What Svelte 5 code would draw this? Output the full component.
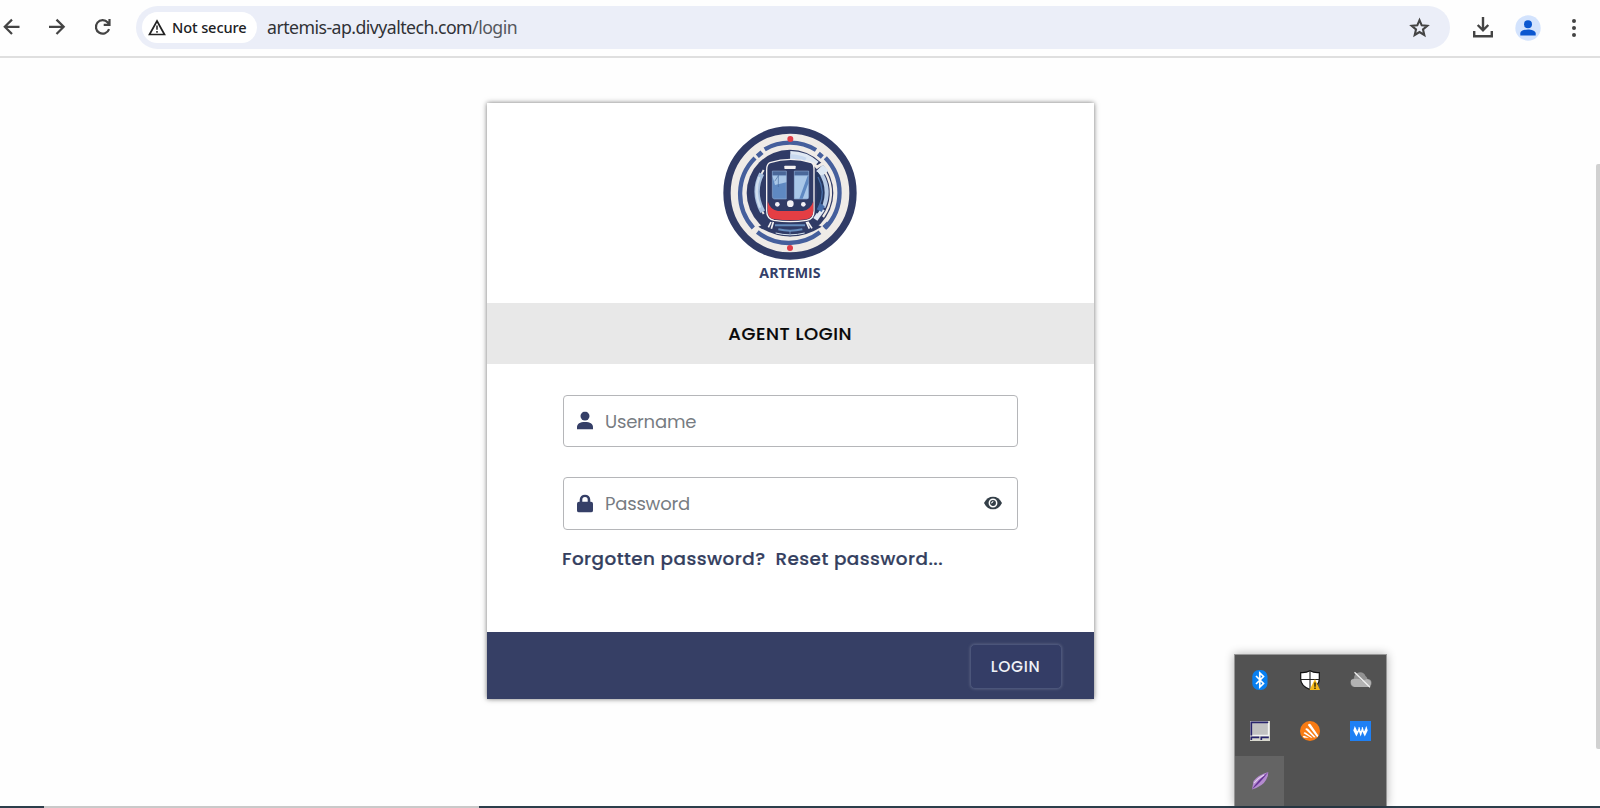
<script>
  let username = $state('');
  let password = $state('');
</script>

<div class="window">
  <header class="toolbar">
    <nav class="nav">
      <svg width="18" height="18" viewBox="0 0 18 18"><path d="M17 9H2.500M9.500 1.800L2.300 9l7.200 7.200" /></svg>
      <svg width="18" height="18" viewBox="0 0 18 18"><path d="M.500 9h14.500M8 1.800l7.200 7.200L8 16.200" /></svg>
      <svg width="18" height="18" viewBox="0 0 18 18"><path d="M14.600 11.400A6.800 6.800 0 1 1 13.300 4.600L15 6.300M15 1.200v5.900H9.200" /></svg>
    </nav>
    <div class="omnibox">
      <div class="chip">
        <svg width="18" height="17" viewBox="0 0 18 17"><path d="M9 2L16.500 15.500H1.500Z" fill="none" stroke="#222" stroke-width="1.700" /><path d="M9 6.500v4.300M9 12v1.700" stroke="#222" stroke-width="1.500" /></svg>
        <span>Not secure</span>
      </div>
      <span class="url">artemis-ap.divyaltech.com<i>/login</i></span>
      <svg class="star" width="22" height="22" viewBox="0 0 22 22"><path fill="none" stroke="#444" stroke-width="2.100" d="M11 3.300l2.200 5.200 5.600.500-4.300 3.700 1.300 5.500-4.800-2.900-4.800 2.900 1.300-5.500-4.300-3.700 5.600-.500z" /></svg>
    </div>
    <svg class="download" width="20" height="21" viewBox="0 0 20 21"><path d="M10 0v13M4.700 8l5.300 5.300L15.300 8M1.200 14v5.200h17.600V14" fill="none" stroke="#444" stroke-width="2.400" /></svg>
    <svg class="avatar" width="26" height="26" viewBox="0 0 26 26"><circle cx="13" cy="13" r="12.700" fill="#d3e3fd" /><circle cx="13" cy="9.200" r="4" fill="#0b57d0" /><path d="M5.300 20.500v-2.100c0-2.800 4.400-4 7.700-4s7.700 1.200 7.700 4v2.100z" fill="#0b57d0" /></svg>
    <svg class="dots" width="4" height="20" viewBox="0 0 4 20"><circle cx="2" cy="3" r="2" /><circle cx="2" cy="10" r="2" /><circle cx="2" cy="17" r="2" /></svg>
  </header>

  <main>
    <form class="card" onsubmit={(e) => e.preventDefault()}>
      <div class="brand">
        <svg width="160" height="170" viewBox="0 0 480 510">
          <circle cx="240" cy="234" r="189" fill="#efebe7" stroke="#303b66" stroke-width="22" />
          <g fill="none" stroke="#455f9c" stroke-width="13">
            <path d="M164 103a152 152 0 0 1 154 2M346 128a152 152 0 0 1-1 212M330 352a152 152 0 0 1-188-1M130 339a152 152 0 0 1 5-210" />
            <path d="M142 124l14-12M325 116l12 10M342 338l14-13" stroke-width="14" />
          </g>
          <circle cx="240" cy="234" r="130" fill="#303b66" />
          <g fill="none">
            <path d="M241 121a113 113 0 0 1 76 29" stroke="#dfe8f3" stroke-width="26" />
            <path d="M241 126a108 108 0 0 1 45 10" stroke="#c8d9ef" stroke-width="17" />
            <path d="M318 158l24-15M309 144l15 16" stroke="#efebe7" stroke-width="9" />
            <path d="M327 177l20-19" stroke="#dce7f3" stroke-width="24" />
            <path d="M346 172a122 122 0 0 1-7 134" stroke="#efebe7" stroke-width="7" />
            <path d="M335 181a109 109 0 0 1 4 95" stroke="#b9cde7" stroke-width="15" />
            <path d="M338 282l-22 31" stroke="#e2eaf4" stroke-width="15" />
            <path d="M314 177a92 92 0 0 1 0 112" stroke="#263861" stroke-width="22" />
            <path d="M324 186a99 99 0 0 1 3 89" stroke="#486da6" stroke-width="4" />
            <path d="M161 165q-39 62 0 132" stroke="#efebe7" stroke-width="6" />
            <path d="M155 176q-29 55 3 114" stroke="#a9c1df" stroke-width="16" />
            <path d="M148 186q-17 42 2 92" stroke="#d1e0ef" stroke-width="7" />
          </g>
          <path d="M330 265l14 9-9 17-15-8z" fill="#446caa" />
          <path d="M177 320h126l32 15q-94 59-190 0z" fill="#303b66" />
          <path d="M195 331h90M205 343q35 8 72 0" fill="none" stroke="#668cbd" stroke-width="6" />
          <path d="M175 337l8-16M184 341l6-20M306 340l-13-20M298 341l-9-20" stroke="#f4f2f2" stroke-width="5" />
          <path d="M197 354q43 11 87 0" fill="none" stroke="#d7e2ee" stroke-width="3" />
          <path d="M240 348v13" stroke="#84a5cd" stroke-width="2" />
          <path d="M180 143q62-20 124 0 8 4 8 20v124q0 25-22 29-50 8-98 0-22-5-22-29V164q0-17 10-21z" fill="#303b66" stroke="#f6f3f2" stroke-width="4" />
          <path d="M173 259q8 27 31 29h74q24-3 32-29v27q0 23-21 27-46 6-95 0-21-3-21-25z" fill="#e43e44" />
          <path d="M187 168h42v84h-36q-6 0-6-8zM253 168h43v76q0 8-6 8h-37z" fill="#5f89c2" />
          <path d="M187 182h42v20l-34 8zM253 182h40l-25 69h-15zM278 251l17-46v46z" fill="#a9c7e8" />
          <path d="M187 168h42v13h-42zM253 168h43v13h-43z" fill="#4a6799" />
          <path d="M187 168h42v84h-36q-6 0-6-8zM253 168h43v76q0 8-6 8h-37zM187 182h42M253 182h43" fill="none" stroke="#9cb7da" stroke-width="1.500" />
          <path d="M205 181v35M194 199l12-18" stroke="#496c9e" stroke-width="2" />
          <rect x="223" y="152" width="34" height="10" rx="2" fill="#f5f2f2" />
          <circle cx="202" cy="268" r="7" fill="#f3f1f5" /><circle cx="241" cy="266" r="10" fill="#f3f1f5" /><circle cx="280" cy="268" r="7" fill="#f3f1f5" />
          <circle cx="241" cy="72" r="9" fill="#df3c48" /><circle cx="240" cy="399" r="9" fill="#df3c48" />
          <text x="148" y="489" textLength="184" lengthAdjust="spacingAndGlyphs">ARTEMIS</text>
        </svg>
      </div>
      <h1><span>AGENT LOGIN</span></h1>
      <div class="fields">
        <label class="field">
          <svg width="16" height="18" viewBox="0 0 16 18"><circle cx="8" cy="4.600" r="4.500" /><path d="M0 18v-2.300C0 12 3 10.400 8 10.400s8 1.600 8 5.300V18z" /></svg>
          <input class="user" type="text" placeholder="Username" bind:value={username} />
        </label>
        <label class="field pass">
          <svg width="16" height="18" viewBox="0 0 16 18"><path fill-rule="evenodd" d="M2.700 7.200V5.300a5.300 5.300 0 0 1 10.600 0v1.900H14a2 2 0 0 1 2 2V16a2 2 0 0 1-2 2H2a2 2 0 0 1-2-2V9.200a2 2 0 0 1 2-2zM5.300 7.200h5.400V5.300a2.700 2.700 0 0 0-5.400 0z" /></svg>
          <input class="pwd" type="password" placeholder="Password" bind:value={password} />
          <svg class="eye" width="18" height="13" viewBox="0 0 18 13"><path fill="#343f48" d="M0 6.500Q3.300 0 9 0t9 6.500Q14.700 13 9 13T0 6.500z" /><circle cx="9" cy="6.500" r="3.700" fill="none" stroke="#fff" stroke-width="1.500" /><path d="M7 6.500a2 2 0 0 0 2-2" fill="none" stroke="#fff" stroke-width="1" /></svg>
        </label>
        <p class="help"><span class="forgot">Forgotten password?</span><span class="reset">Reset password...</span></p>
      </div>
      <footer><button type="submit"><span>LOGIN</span></button></footer>
    </form>
  </main>

  <div class="scrollbar"></div>
  <div class="taskline"></div>

  <div class="tray">
    <div class="cell"><svg width="20" height="20" viewBox="0 0 20 20"><rect x="2.300" width="15.200" height="20" rx="6.500" fill="#087ff0" /><path d="M6 6l7.500 7.500L9.800 17V3l3.700 3.500L6 14" fill="none" stroke="#fff" stroke-width="1.700" /></svg></div>
    <div class="cell"><svg width="20" height="20" viewBox="0 0 20 20"><path d="M10 .700Q14 3 19.300 2.500V9q0 7-9.300 10.500Q.700 16 .700 9V2.500Q6 3 10 .700z" fill="#fff" stroke="#111" stroke-width="1.200" /><path d="M10 1v18M1 9.500h18" stroke="#222" stroke-width="1.100" /><path d="M15 9l5 11H9.500z" fill="#f5b91b" /><path d="M15 12.500v4.300M15 17.600V19" stroke="#332807" stroke-width="1.500" /></svg></div>
    <div class="cell"><svg width="22" height="20" viewBox="0 0 22 20"><path d="M4.500 17A4.300 4.300 0 0 1 4 8.500 6 6 0 0 1 15.500 6q1.500 1 2 3a4 4 0 0 1 0 8z" fill="#929292" /><path d="M1 10q8-3 11 1l5-2q4 1 4 4-.500 4-3.500 4H4.500q-4.500-2-3.500-7z" fill="#b3b3b3" /><path d="M4.500 2.200l15.500 15" stroke="#f0f0f0" stroke-width="1.300" /></svg></div>
    <div class="cell"><svg width="20" height="20" viewBox="0 0 20 20"><path d="M0 0h20v20H0z" fill="#d9d9cf" /><path d="M1 1h18v13H1z" fill="#c2c2c2" /><path d="M1.300 14.500V1.300H18M1.300 19v-2.700h8M11.300 19v-2.700h7.500" fill="none" stroke="#28246c" stroke-width="1.700" /><path d="M18.500 2v12.300H2.500" fill="none" stroke="#f4f4f4" stroke-width="1.300" /></svg></div>
    <div class="cell"><svg width="20" height="20" viewBox="0 0 20 20"><circle cx="10" cy="10" r="10" fill="#f77b14" /><path d="M8 4.200Q8.500 2 10.600 3.300L18.300 14.500q-.300 1.500-1.300 1.500zM5.300 8.200q.800-1.700 2.700-.400l7.700 8.500-1.700.100zM3.600 12.300q.700-1.600 2.400-.500l6.500 4.700-1.500.200zM2.800 15.600q.500-1.300 2-.700L9 16.700l-5 .100z" fill="#fff" /></svg></div>
    <div class="cell"><svg width="21" height="20" viewBox="0 0 21 20"><path d="M0 0h21v20H0z" fill="#1f80f4" /><path d="M3.300 9.500L4.800 5l2.400 5 1.600-4h.600l1.300 4 1.300-4h.600l1.400 4L16.400 5l1.300 4.500-2.900 6-2.400-5-1.700 5-1.800-5-2.500 5z" fill="#fff" /><path d="M7.200 10l1.100-3M10.600 10l1-3M14 10l1.200-3" stroke="#1f80f4" stroke-width=".600" /></svg></div>
    <div class="cell active"><svg width="20" height="20" viewBox="0 0 20 20"><path d="M18.300 1Q8 4 3.500 10L2 18.500q11-3.500 14-9.500 2.500-4 2.300-8z" fill="#b48bcf" /><path d="M18.300 1Q12 10 2 18.500q4-7.500 16.300-17.500z" fill="#653096" /><path d="M4 12Q8 7 14 4" stroke="#e6d3ef" stroke-width="1.200" fill="none" /></svg></div>
  </div>
</div>

<style>
  :global(body) { margin: 0; overflow: hidden; background: #fefefe; }
  * { box-sizing: border-box; }
  svg { display: block; flex: none; }
  .window { position: relative; width: 1600px; height: 808px; background: #fefefe; overflow: hidden; font-family: Poppins, Inter, sans-serif; }
  .toolbar { height: 58px; display: flex; align-items: flex-start; border-bottom: 2px solid #dfdfdf; padding-top: 6px; }
  .nav { width: 136px; padding: 12px 0 0 3px; display: flex; gap: 28px; }
  .nav svg { fill: none; stroke: #444; stroke-width: 2.2; }
  .nav svg, .star { transform: translate(-.5px, -.2px); }
  .omnibox { width: 1314px; height: 43px; border-radius: 22px; background: #ebeef8; display: flex; align-items: center; padding-left: 6px; font-family: "Noto Sans", sans-serif; }
  .chip { width: 115px; height: 31px; border-radius: 16px; background: #fff; display: flex; align-items: center; padding: 0 0 1px 6px; gap: 6px; font-size: 14.6px; color: #202124; white-space: nowrap; }
  .chip span { font-weight: 500; letter-spacing: -.12px; }
  .url { margin: 0 0 2px 10px; font-size: 17.7px; letter-spacing: -.54px; color: #303236; white-space: nowrap; }
  .url i { font-style: normal; color: #55585d; }
  .star { margin: 0 19px 0 auto; }
  .download { margin: 11px 0 0 23px; }
  .avatar { margin: 8.5px 0 0 22px; }
  .dots { margin: 11.5px 0 0 31px; fill: #444; }
  main { padding: 45px 0 0 487px; }
  .card { width: 606.5px; height: 596px; background: #fff; box-shadow: 0 0 5px rgba(0, 0, 0, .55); display: flex; flex-direction: column; }
  .brand { height: 200px; padding: 12px 0 0 223px; display: flex; }
  .brand text { font: 700 43px "Open Sans", sans-serif; fill: #343f69; }
  h1 { margin: 0; height: 61px; background: #e8e8e8; display: flex; align-items: center; justify-content: center; font-size: 18px; font-weight: 500; letter-spacing: .58px; color: #080808; -webkit-text-stroke: .2px #080808; }
  .fields { height: 268px; padding: 31px 76px 0; }
  .field { height: 52px; border: 1px solid #b5b6b9; border-radius: 4px; display: flex; align-items: center; padding: 0 15px 0 13px; fill: #353f67; }
  .pass { height: 53px; margin-top: 30px; }
  .field > svg { transform: translateY(-.5px); }
  input { min-width: 0; flex: 1; border: 0; outline: 0; padding: 0; margin-left: 12px; background: transparent; font: 400 18px Poppins, Inter, sans-serif; letter-spacing: -.2px; color: #353f67; }
  input::placeholder { color: #777c82; opacity: 1; }
  .help { margin: 17px 0 0 -1px; display: flex; gap: 10px; font-size: 18.4px; line-height: 24px; font-weight: 500; letter-spacing: .44px; color: #353f5f; -webkit-text-stroke: .2px #353f5f; white-space: nowrap; }
  footer { height: 67px; background: #363f65; display: flex; justify-content: flex-end; padding: 12px 31.5px 0 0; }
  button { width: 92px; height: 45px; border: 1px solid #4b557a; border-radius: 5px; background: #343d66; box-shadow: 0 0 3px #606987; color: #f0f2f7; padding: 0 1px 1px 0; font: 500 15.5px Poppins, Inter, sans-serif; letter-spacing: .65px; }
  .scrollbar { position: absolute; right: 0; top: 164px; width: 4px; height: 585px; background: #d1d1d1; border-radius: 2px 0 0 2px; }
  .taskline { position: absolute; left: 0; bottom: 0; width: 1600px; height: 2px; background: linear-gradient(90deg, #2c3e4b 44px, #c9c9c9 44px 479px, #2c3e4b 479px); }
  .tray { position: absolute; left: 1234px; top: 654px; width: 153px; height: 152px; background: #525252; border: 1px solid #969696; border-bottom: 0; box-shadow: 0 0 9px rgba(0, 0, 0, .3); display: grid; grid-template-columns: 49px 51px 51px; grid-template-rows: 50px 51px 50px; }
  .cell { display: flex; align-items: center; justify-content: center; }
  .active { background: #646464; }
</style>
